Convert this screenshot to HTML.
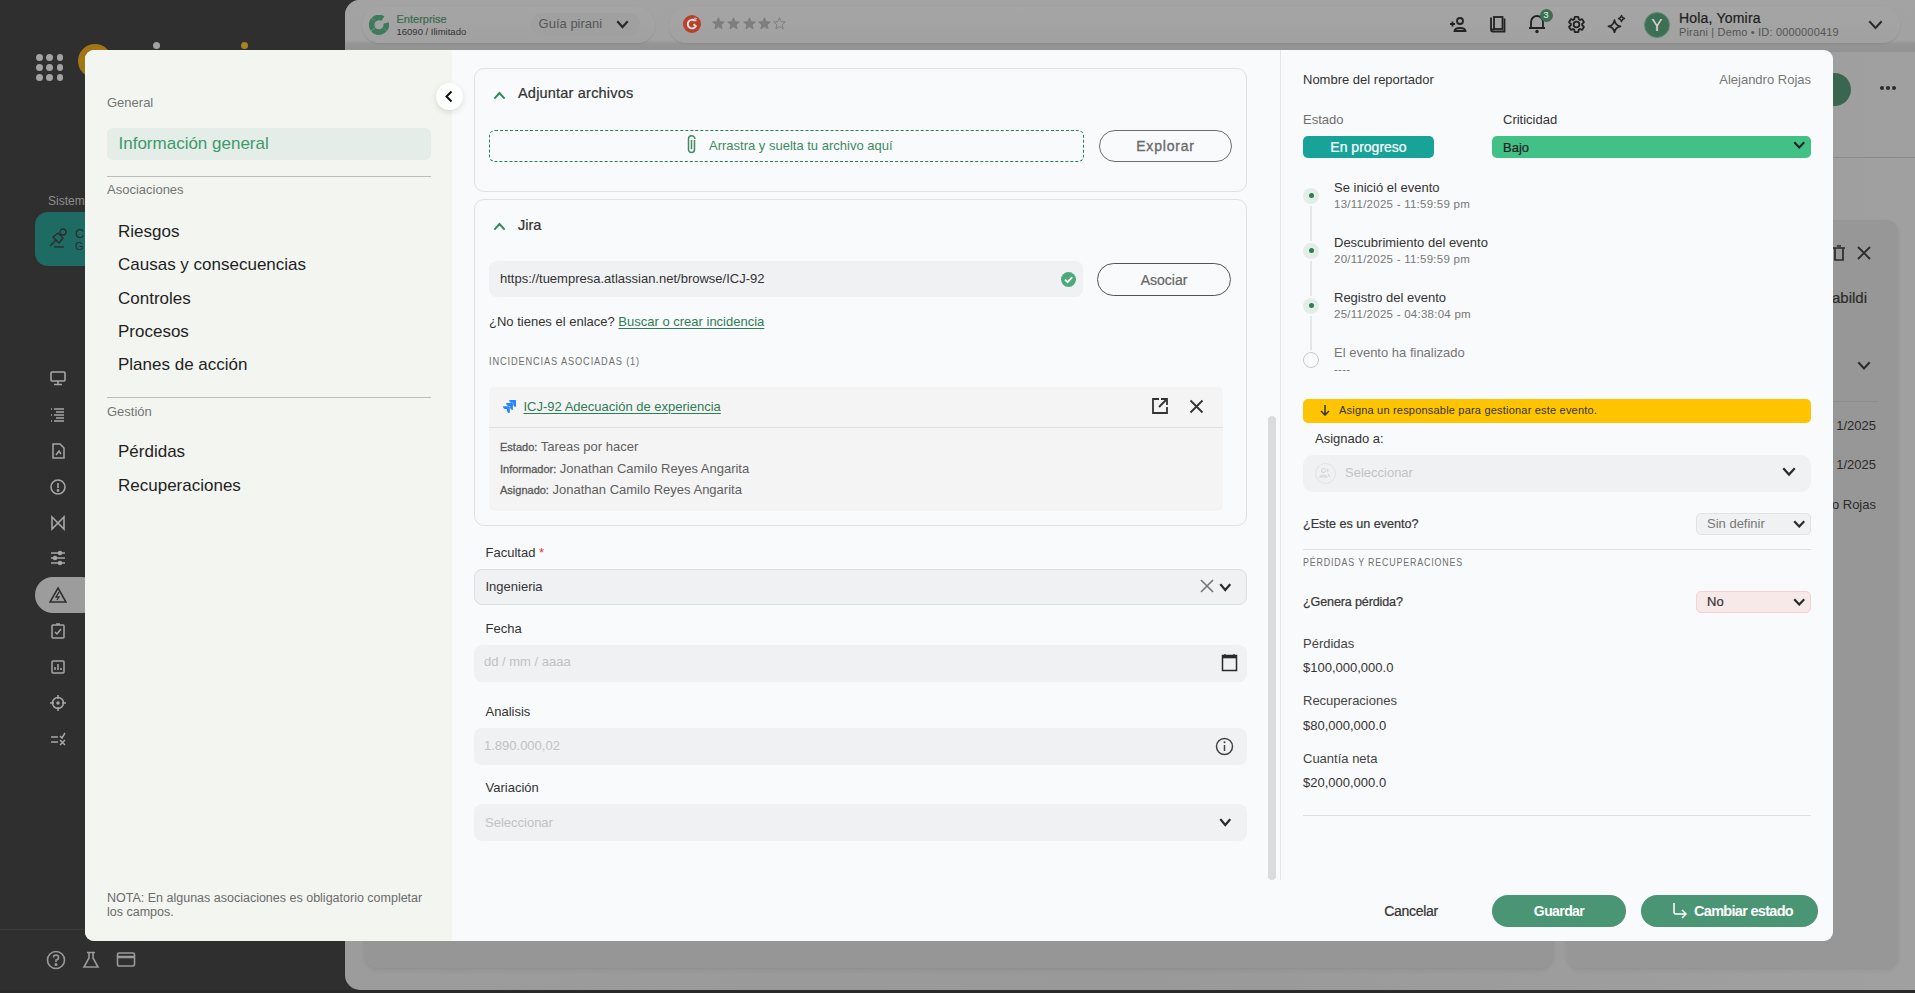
<!DOCTYPE html>
<html><head><meta charset="utf-8"><title>Evento</title>
<style>
*{box-sizing:border-box;margin:0;padding:0}
html,body{width:1915px;height:993px;overflow:hidden;background:#2f2f2f;font-family:"Liberation Sans",sans-serif}
.t{position:absolute;white-space:nowrap}
.r{position:absolute}
u{text-decoration:underline;text-underline-offset:2px}
</style></head><body>

<div class="r" style="left:0px;top:0px;width:345px;height:993px;background:#2f2f2f;border-radius:0px;"></div>
<div class="r" style="left:36.0px;top:54.0px;width:6.5px;height:6.5px;background:#a3a3a3;border-radius:4px;"></div>
<div class="r" style="left:46.3px;top:54.0px;width:6.5px;height:6.5px;background:#a3a3a3;border-radius:4px;"></div>
<div class="r" style="left:56.6px;top:54.0px;width:6.5px;height:6.5px;background:#a3a3a3;border-radius:4px;"></div>
<div class="r" style="left:36.0px;top:64.2px;width:6.5px;height:6.5px;background:#a3a3a3;border-radius:4px;"></div>
<div class="r" style="left:46.3px;top:64.2px;width:6.5px;height:6.5px;background:#a3a3a3;border-radius:4px;"></div>
<div class="r" style="left:56.6px;top:64.2px;width:6.5px;height:6.5px;background:#a3a3a3;border-radius:4px;"></div>
<div class="r" style="left:36.0px;top:74.4px;width:6.5px;height:6.5px;background:#a3a3a3;border-radius:4px;"></div>
<div class="r" style="left:46.3px;top:74.4px;width:6.5px;height:6.5px;background:#a3a3a3;border-radius:4px;"></div>
<div class="r" style="left:56.6px;top:74.4px;width:6.5px;height:6.5px;background:#a3a3a3;border-radius:4px;"></div>
<div class="r" style="left:78px;top:44px;width:34px;height:34px;border-radius:50%;background:#a27617"></div>
<div class="r" style="left:153px;top:42px;width:7px;height:7px;background:#a3a3a3;border-radius:4px;"></div>
<div class="r" style="left:241px;top:42px;width:7px;height:7px;background:#a9841d;border-radius:4px;"></div>
<div class="t" style="top:193.84px;font-size:12px;line-height:15px;color:#8e8e8e;font-weight:400;left:48px;">Sistema</div>
<div class="r" style="left:35px;top:212px;width:85px;height:54px;background:#1e6b63;border-radius:13px;"></div>
<svg class="r" style="left:48px;top:228px;" width="20" height="20" viewBox="0 0 20 20"><g fill="none" stroke="#2b2b2b" stroke-width="1.3"><path d="M2 18 L8 12"/><path d="M5 9 L11 15 L15 10 L10 5 Z"/><path d="M6 19 L16 19"/><circle cx="15" cy="4" r="3"/></g></svg>
<div class="t" style="top:225.50px;font-size:13px;line-height:16px;color:#2b2b2b;font-weight:400;left:75px;">C</div>
<div class="t" style="top:239.19px;font-size:11px;line-height:14px;color:#2b2b2b;font-weight:400;left:75px;">G</div>
<div class="r" style="left:35px;top:577px;width:65px;height:36px;background:#9c9c9c;border-radius:18px;"></div>
<svg class="r" style="left:49px;top:369px;" width="18" height="18" viewBox="0 0 18 18"><g fill="none" stroke="#a6a6a6" stroke-width="1.6"><rect x="2" y="3" width="14" height="9" rx="1"/><path d="M9 12 V15 M5 15.5 H13"/></g></svg>
<svg class="r" style="left:49px;top:405px;" width="18" height="18" viewBox="0 0 18 18"><g fill="none" stroke="#a6a6a6" stroke-width="1.4"><path d="M5 4 H15 M7 7 H15 M5 10 H15 M7 13 H15 M5 16 H15"/><path d="M2 4 H3 M2 10 H3 M2 16 H3"/></g></svg>
<svg class="r" style="left:49px;top:442px;" width="18" height="18" viewBox="0 0 18 18"><g fill="none" stroke="#a6a6a6" stroke-width="1.5"><path d="M4 2 H11 L15 6 V16 H4 Z"/><path d="M7 13 L10 9 L12 12"/></g></svg>
<svg class="r" style="left:49px;top:478px;" width="18" height="18" viewBox="0 0 18 18"><g fill="none" stroke="#a6a6a6" stroke-width="1.6"><circle cx="9" cy="9" r="7"/><path d="M9 5 V10"/><circle cx="9" cy="12.5" r="0.6" fill="#a6a6a6"/></g></svg>
<svg class="r" style="left:49px;top:514px;" width="18" height="18" viewBox="0 0 18 18"><g fill="none" stroke="#a6a6a6" stroke-width="1.6"><path d="M3 3 L15 15 V3 L3 15 Z"/></g></svg>
<svg class="r" style="left:49px;top:549px;" width="18" height="18" viewBox="0 0 18 18"><g fill="none" stroke="#a6a6a6" stroke-width="1.5"><path d="M2 4 H16 M2 9 H16 M2 14 H16"/><circle cx="11" cy="4" r="1.5" fill="#a6a6a6"/><circle cx="6" cy="9" r="1.5" fill="#a6a6a6"/><circle cx="11" cy="14" r="1.5" fill="#a6a6a6"/></g></svg>
<svg class="r" style="left:49px;top:586px;" width="18" height="18" viewBox="0 0 18 18"><g fill="none" stroke="#2e2e2e" stroke-width="1.6"><path d="M9 2 L17 16 H1 Z"/><path d="M10 6 L7 11 H10 L8 14" stroke-width="1.3"/></g></svg>
<svg class="r" style="left:49px;top:622px;" width="18" height="18" viewBox="0 0 18 18"><g fill="none" stroke="#a6a6a6" stroke-width="1.5"><rect x="3" y="3" width="12" height="13" rx="1"/><path d="M6 10 L8 12 L12 7"/><path d="M7 2 H11"/></g></svg>
<svg class="r" style="left:49px;top:658px;" width="18" height="18" viewBox="0 0 18 18"><g fill="none" stroke="#a6a6a6" stroke-width="1.5"><rect x="3" y="3" width="12" height="12" rx="1"/><path d="M6 12 V9 M9 12 V6 M12 12 V10"/></g></svg>
<svg class="r" style="left:49px;top:694px;" width="18" height="18" viewBox="0 0 18 18"><g fill="none" stroke="#a6a6a6" stroke-width="1.5"><circle cx="9" cy="9" r="5.5"/><path d="M9 1 V5 M9 13 V17 M1 9 H5 M13 9 H17"/><circle cx="9" cy="9" r="1" fill="#a6a6a6"/></g></svg>
<svg class="r" style="left:49px;top:730px;" width="18" height="18" viewBox="0 0 18 18"><g fill="none" stroke="#a6a6a6" stroke-width="1.5"><path d="M2 7 H9 M2 12 H9"/><path d="M11 6 L13 8 L16 3"/><path d="M11 10 L16 15 M16 10 L11 15"/></g></svg>
<div class="r" style="left:0px;top:929px;width:345px;height:1px;background:#3b3b3b;border-radius:0px;"></div>
<svg class="r" style="left:46px;top:950px;" width="20" height="20" viewBox="0 0 20 20"><g fill="none" stroke="#9a9a9a" stroke-width="1.6"><circle cx="10" cy="10" r="8.5"/><path d="M7.5 7.5 A2.5 2.5 0 1 1 10 10 V12"/><circle cx="10" cy="14.5" r="0.7" fill="#9a9a9a"/></g></svg>
<svg class="r" style="left:82px;top:951px;" width="18" height="18" viewBox="0 0 18 18"><g fill="none" stroke="#9a9a9a" stroke-width="1.6"><path d="M5 1.5 H13 M7 1.5 V7 L2 16 H16 L11 7 V1.5"/></g></svg>
<svg class="r" style="left:116px;top:951px;" width="20" height="18" viewBox="0 0 20 18"><g fill="none" stroke="#9a9a9a" stroke-width="1.6"><rect x="1.5" y="2" width="17" height="13" rx="1.5"/><path d="M1.5 6 H18.5" stroke-width="2.5"/></g></svg>
<div class="r" style="left:0px;top:990px;width:1915px;height:3px;background:#2a2a2a;border-radius:0px;"></div>
<div class="r" style="left:345px;top:0;width:1570px;height:990px;background:linear-gradient(90deg,#9c9c9c,#999 50%,#a0a0a0);border-top-left-radius:15px;border-bottom-left-radius:15px"></div>
<div class="r" style="left:345px;top:0px;width:1570px;height:52px;background:linear-gradient(#a3a3a3 0px,#a2a2a2 40px,#949494 44px,#939393 52px);border-radius:0px;border-top-left-radius:15px;"></div>
<div class="r" style="left:362px;top:7px;width:293px;height:36px;background:linear-gradient(#a5a5a5,#a1a1a1);border-radius:18px;box-shadow:0 1px 2px rgba(0,0,0,0.10);"></div>
<div class="r" style="left:531px;top:13px;width:109px;height:23px;background:#a0a0a0;border-radius:12px;"></div>
<div class="r" style="left:669px;top:7px;width:1231px;height:36px;background:linear-gradient(#a5a5a5,#a1a1a1);border-radius:18px;box-shadow:0 1px 2px rgba(0,0,0,0.10);"></div>
<svg class="r" style="left:369px;top:15px;" width="20" height="20" viewBox="0 0 20 20"><circle cx="10" cy="9.8" r="7.3" fill="none" stroke="#3f7a5c" stroke-width="5.6" stroke-dasharray="6.37 0.38 13 0.38 9.81 0.38 9.81 5.73" transform="rotate(-15 10 9.8)"/></svg>
<div class="t" style="top:12.19px;font-size:11px;line-height:14px;color:#3b6b53;font-weight:400;-webkit-text-stroke:0.22px currentColor;left:396.5px;">Enterprise</div>
<div class="t" style="top:25.71px;font-size:9.5px;line-height:12px;color:#333;font-weight:400;left:396.5px;">16090 / Ilimitado</div>
<div class="t" style="top:15.50px;font-size:13px;line-height:16px;color:#565656;font-weight:400;left:538.6px;">Guía pirani</div>
<svg class="r" style="left:615.5px;top:19.8px;" width="13" height="9" viewBox="0 0 13 9"><path d="M2 2 L6.5 7 L11 2" fill="none" stroke="#2a2a2a" stroke-width="2.2" stroke-linecap="square"/></svg>
<svg class="r" style="left:683px;top:15px;" width="18" height="18" viewBox="0 0 18 18"><circle cx="9" cy="9" r="9" fill="#b9412c"/><path d="M11.6 5.6 A4.3 4.3 0 1 0 12.8 11.2 L10.6 9.3" fill="none" stroke="#e6e6e6" stroke-width="1.9"/><path d="M11.2 3.6 Q12.6 2.6 13.4 3.5 Q13.6 4.4 11.4 5.8 H13.6" fill="none" stroke="#e6e6e6" stroke-width="0.9"/></svg>
<svg class="r" style="left:712.0px;top:17px;" width="13" height="13" viewBox="0 0 13 13"><path d="M6.5 0.8 L8.2 4.7 L12.3 5 L9.2 7.7 L10.1 11.8 L6.5 9.6 L2.9 11.8 L3.8 7.7 L0.7 5 L4.8 4.7 Z" fill="#7e7e7e" stroke="#7e7e7e" stroke-width="1"/></svg>
<svg class="r" style="left:727.3px;top:17px;" width="13" height="13" viewBox="0 0 13 13"><path d="M6.5 0.8 L8.2 4.7 L12.3 5 L9.2 7.7 L10.1 11.8 L6.5 9.6 L2.9 11.8 L3.8 7.7 L0.7 5 L4.8 4.7 Z" fill="#7e7e7e" stroke="#7e7e7e" stroke-width="1"/></svg>
<svg class="r" style="left:742.6px;top:17px;" width="13" height="13" viewBox="0 0 13 13"><path d="M6.5 0.8 L8.2 4.7 L12.3 5 L9.2 7.7 L10.1 11.8 L6.5 9.6 L2.9 11.8 L3.8 7.7 L0.7 5 L4.8 4.7 Z" fill="#7e7e7e" stroke="#7e7e7e" stroke-width="1"/></svg>
<svg class="r" style="left:757.9px;top:17px;" width="13" height="13" viewBox="0 0 13 13"><path d="M6.5 0.8 L8.2 4.7 L12.3 5 L9.2 7.7 L10.1 11.8 L6.5 9.6 L2.9 11.8 L3.8 7.7 L0.7 5 L4.8 4.7 Z" fill="#7e7e7e" stroke="#7e7e7e" stroke-width="1"/></svg>
<svg class="r" style="left:773.2px;top:17px;" width="13" height="13" viewBox="0 0 13 13"><path d="M6.5 0.8 L8.2 4.7 L12.3 5 L9.2 7.7 L10.1 11.8 L6.5 9.6 L2.9 11.8 L3.8 7.7 L0.7 5 L4.8 4.7 Z" fill="none" stroke="#7e7e7e" stroke-width="1"/></svg>
<svg class="r" style="left:1448px;top:15px;" width="20" height="18" viewBox="0 0 20 18"><g fill="none" stroke="#222" stroke-width="1.8"><path d="M2 9 H7 M4.5 6.5 V11.5"/><circle cx="12" cy="6" r="3"/><path d="M6.5 16 C7 12 17 12 17.5 16 Z"/></g></svg>
<svg class="r" style="left:1489px;top:16px;" width="17" height="17" viewBox="0 0 17 17"><g fill="none" stroke="#222" stroke-width="1.8"><path d="M2 1.5 V14 Q2 15.5 3.5 15.5 H15.5 V2.5"/><rect x="5" y="1" width="8.5" height="12"/><path d="M2 13.5 H5"/></g></svg>
<svg class="r" style="left:1527px;top:12px;" width="20" height="22" viewBox="0 0 20 22"><g fill="none" stroke="#222" stroke-width="1.8"><path d="M4 16 V10 A6 6 0 0 1 16 10 V16 Z M2 16 H18"/></g><circle cx="10" cy="19.5" r="1.7" fill="#222"/></svg>
<div class="r" style="left:1539.5px;top:8.5px;width:13px;height:13px;border-radius:50%;background:#3c6f54"></div>
<div class="t" style="top:10.38px;font-size:9px;line-height:11px;color:#ddd;font-weight:400;-webkit-text-stroke:0.22px currentColor;left:1540.00px;width:12px;text-align:center;">3</div>
<svg class="r" style="left:1567px;top:14.5px;" width="19" height="19" viewBox="0 0 24 24"><path d="M19.14 12.94c.04-.3.06-.61.06-.94 0-.32-.02-.64-.07-.94l2.03-1.58c.18-.14.23-.41.12-.61l-1.92-3.32c-.12-.22-.37-.29-.59-.22l-2.39.96c-.5-.38-1.03-.7-1.62-.94l-.36-2.54c-.04-.24-.24-.41-.48-.41h-3.84c-.24 0-.43.17-.47.41l-.36 2.54c-.59.24-1.13.57-1.62.94l-2.39-.96c-.22-.08-.47 0-.59.22L2.74 8.87c-.12.21-.08.47.12.61l2.03 1.58c-.05.3-.09.63-.09.94s.02.64.07.94l-2.03 1.58c-.18.14-.23.41-.12.61l1.92 3.32c.12.22.37.29.59.22l2.39-.96c.5.38 1.03.7 1.62.94l.36 2.54c.05.24.24.41.48.41h3.84c.24 0 .44-.17.47-.41l.36-2.54c.59-.24 1.13-.56 1.62-.94l2.39.96c.22.08.47 0 .59-.22l1.92-3.32c.12-.22.07-.47-.12-.61l-2.01-1.58zM12 15.6c-1.98 0-3.6-1.62-3.6-3.6s1.62-3.6 3.6-3.6 3.6 1.62 3.6 3.6-1.62 3.6-3.6 3.6z" fill="none" stroke="#222" stroke-width="2.3" stroke-linejoin="round"/></svg>
<svg class="r" style="left:1607px;top:13.5px;" width="19" height="19" viewBox="0 0 19 19"><g fill="none" stroke="#222" stroke-width="1.7" stroke-linejoin="round"><path d="M7.5 6 Q8.3 11.5 13.5 12.3 Q8.3 13.1 7.5 18.5 Q6.7 13.1 1.5 12.3 Q6.7 11.5 7.5 6 Z"/><path d="M14.5 1.5 Q15 4 17.5 4.5 Q15 5 14.5 7.5 Q14 5 11.5 4.5 Q14 4 14.5 1.5 Z" stroke-width="1.4"/></g></svg>
<div class="r" style="left:1644px;top:12px;width:26px;height:26px;border-radius:50%;background:#3d6f55;border:1px solid #5e8a72"></div>
<div class="t" style="top:14.61px;font-size:17px;line-height:21px;color:#d8d8d8;font-weight:400;left:1644.00px;width:26px;text-align:center;">Y</div>
<div class="t" style="top:8.85px;font-size:14px;line-height:18px;color:#1e1e1e;font-weight:400;-webkit-text-stroke:0.22px currentColor;letter-spacing:0.2px;left:1679px;">Hola, Yomira</div>
<div class="t" style="top:24.59px;font-size:11px;line-height:14px;color:#555;font-weight:400;letter-spacing:0.17px;left:1679px;">Pirani | Demo • ID: 0000000419</div>
<svg class="r" style="left:1867.5px;top:20.0px;" width="15" height="10" viewBox="0 0 15 10"><path d="M2 2 L7.5 8 L13 2" fill="none" stroke="#2a2a2a" stroke-width="2" stroke-linecap="square"/></svg>
<div class="r" style="left:1818px;top:73px;width:33px;height:33px;border-radius:50%;background:#3a6650"></div>
<div class="r" style="left:1880px;top:86px;width:4px;height:4px;background:#2a2a2a;border-radius:2px;"></div>
<div class="r" style="left:1886px;top:86px;width:4px;height:4px;background:#2a2a2a;border-radius:2px;"></div>
<div class="r" style="left:1892px;top:86px;width:4px;height:4px;background:#2a2a2a;border-radius:2px;"></div>
<div class="r" style="left:1833px;top:157px;width:82px;height:1px;background:#8a8a8a;border-radius:0px;"></div>
<div class="r" style="left:1567px;top:220px;width:331px;height:748px;background:#979797;border-radius:12px;box-shadow:0 2px 4px rgba(0,0,0,0.08);"></div>
<div class="r" style="left:365px;top:900px;width:1188px;height:68px;background:#969696;border-radius:12px;box-shadow:0 2px 4px rgba(0,0,0,0.08);"></div>
<svg class="r" style="left:1832px;top:245px;" width="14" height="16" viewBox="0 0 14 16"><g fill="none" stroke="#2b2b2b" stroke-width="1.7"><path d="M1 3 H13 M5 1 H9 M3 3 V15 H11 V3"/></g></svg>
<svg class="r" style="left:1857px;top:246px;" width="14" height="14" viewBox="0 0 14 14"><g fill="none" stroke="#2b2b2b" stroke-width="1.8"><path d="M1 1 L13 13 M13 1 L1 13"/></g></svg>
<div class="t" style="top:288.30px;font-size:15px;line-height:19px;color:#2b2b2b;font-weight:400;-webkit-text-stroke:0.22px currentColor;left:1832px;">abildi</div>
<svg class="r" style="left:1857.0px;top:361.25px;" width="14" height="9.5" viewBox="0 0 14 9.5"><path d="M2 2 L7.0 7.5 L12 2" fill="none" stroke="#2b2b2b" stroke-width="2" stroke-linecap="square"/></svg>
<div class="r" style="left:1833px;top:401px;width:45px;height:1px;background:#8c8c8c;border-radius:0px;"></div>
<div class="t" style="top:417.50px;font-size:13px;line-height:16px;color:#2b2b2b;font-weight:400;right:39px;text-align:right;">1/2025</div>
<div class="t" style="top:456.50px;font-size:13px;line-height:16px;color:#2b2b2b;font-weight:400;right:39px;text-align:right;">1/2025</div>
<div class="t" style="top:496.50px;font-size:13px;line-height:16px;color:#2b2b2b;font-weight:400;right:39px;text-align:right;">ro Rojas</div>
<div class="r" style="left:85px;top:50px;width:1748px;height:891px;border-radius:9px;background:#f9fafb;overflow:hidden"><div class="r" style="left:0;top:0;width:367px;height:891px;background:#f3f5f1"></div></div>
<div class="t" style="top:94.50px;font-size:13px;line-height:16px;color:#757575;font-weight:400;left:107px;">General</div>
<div class="r" style="left:107px;top:128px;width:324px;height:32px;background:#e4ede8;border-radius:6px;"></div>
<div class="t" style="top:132.81px;font-size:17px;line-height:21px;color:#3d9a6b;font-weight:400;left:118.5px;">Información general</div>
<div class="r" style="left:107px;top:176px;width:324px;height:1px;background:#bdbdbd;border-radius:0px;"></div>
<div class="t" style="top:182.10px;font-size:13px;line-height:16px;color:#757575;font-weight:400;left:107px;">Asociaciones</div>
<div class="t" style="top:220.91px;font-size:17px;line-height:21px;color:#1f1f1f;font-weight:400;left:118px;">Riesgos</div>
<div class="t" style="top:253.81px;font-size:17px;line-height:21px;color:#1f1f1f;font-weight:400;left:118px;">Causas y consecuencias</div>
<div class="t" style="top:287.61px;font-size:17px;line-height:21px;color:#1f1f1f;font-weight:400;left:118px;">Controles</div>
<div class="t" style="top:320.81px;font-size:17px;line-height:21px;color:#1f1f1f;font-weight:400;left:118px;">Procesos</div>
<div class="t" style="top:354.31px;font-size:17px;line-height:21px;color:#1f1f1f;font-weight:400;left:118px;">Planes de acción</div>
<div class="r" style="left:107px;top:397px;width:324px;height:1px;background:#bdbdbd;border-radius:0px;"></div>
<div class="t" style="top:403.60px;font-size:13px;line-height:16px;color:#757575;font-weight:400;left:107px;">Gestión</div>
<div class="t" style="top:441.31px;font-size:17px;line-height:21px;color:#1f1f1f;font-weight:400;left:118px;">Pérdidas</div>
<div class="t" style="top:475.11px;font-size:17px;line-height:21px;color:#1f1f1f;font-weight:400;left:118px;">Recuperaciones</div>
<div class="t" style="top:889.97px;font-size:12.5px;line-height:16px;color:#6b6b6b;font-weight:400;left:107px;">NOTA: En algunas asociaciones es obligatorio completar</div>
<div class="t" style="top:904.17px;font-size:12.5px;line-height:16px;color:#6b6b6b;font-weight:400;left:107px;">los campos.</div>
<div class="r" style="left:436px;top:83px;width:27px;height:27px;border-radius:50%;background:#fff;box-shadow:0 2px 6px rgba(0,0,0,0.12)"></div>
<svg class="r" style="left:444px;top:90px;" width="10" height="13" viewBox="0 0 10 13"><path d="M7.5 1.5 L2.5 6.5 L7.5 11.5" fill="none" stroke="#111" stroke-width="2"/></svg>
<div class="r" style="left:474px;top:68px;width:772.5px;height:123.5px;background:#f9fafb;border-radius:10px;border:1px solid #e0e1e3;"></div>
<svg class="r" style="left:493.2px;top:90.7px;" width="13" height="9" viewBox="0 0 13 9"><path d="M2 7 L6.5 2 L11 7" fill="none" stroke="#2e8a5c" stroke-width="1.9" stroke-linecap="square"/></svg>
<div class="t" style="top:83.98px;font-size:14.5px;line-height:18px;color:#333;font-weight:400;-webkit-text-stroke:0.22px currentColor;letter-spacing:0.2px;left:518px;">Adjuntar archivos</div>
<div class="r" style="left:489px;top:130px;width:595px;height:32px;background:transparent;border-radius:6px;border:1px dashed #2e7d53;"></div>
<svg class="r" style="left:685px;top:134px;" width="13" height="22" viewBox="0 0 13 22"><path d="M9.5 6 V15.5 A3 3 0 0 1 3.5 15.5 V5 A3.2 3.2 0 0 1 9.9 5" fill="none" stroke="#3f8a63" stroke-width="1.5"/><path d="M6.5 6 V15" fill="none" stroke="#3f8a63" stroke-width="1.5"/></svg>
<div class="t" style="top:137.50px;font-size:13px;line-height:16px;color:#3f8a63;font-weight:400;left:709px;">Arrastra y suelta tu archivo aquí</div>
<div class="r" style="left:1099px;top:130px;width:133px;height:32px;background:transparent;border-radius:16px;border:1.5px solid #6e6e6e;"></div>
<div class="t" style="top:137.15px;font-size:14px;line-height:18px;color:#6b6b6b;font-weight:400;-webkit-text-stroke:0.22px currentColor;letter-spacing:0.8px;left:1099.00px;width:133px;text-align:center;-webkit-text-stroke:0.35px #6b6b6b;">Explorar</div>
<div class="r" style="left:474px;top:199px;width:772.5px;height:326.5px;background:#f9fafb;border-radius:10px;border:1px solid #e0e1e3;"></div>
<svg class="r" style="left:493.2px;top:222.4px;" width="13" height="9" viewBox="0 0 13 9"><path d="M2 7 L6.5 2 L11 7" fill="none" stroke="#2e8a5c" stroke-width="1.9" stroke-linecap="square"/></svg>
<div class="t" style="top:216.18px;font-size:14.5px;line-height:18px;color:#333;font-weight:400;-webkit-text-stroke:0.22px currentColor;left:518px;">Jira</div>
<div class="r" style="left:489px;top:261px;width:594px;height:36px;background:#f0f1f3;border-radius:8px;"></div>
<div class="t" style="top:270.70px;font-size:13px;line-height:16px;color:#333;font-weight:400;left:500px;">https://tuempresa.atlassian.net/browse/ICJ-92</div>
<svg class="r" style="left:1060.5px;top:271.5px;" width="15" height="15" viewBox="0 0 15 15"><circle cx="7.5" cy="7.5" r="7.5" fill="#4caa7a"/><path d="M4 7.7 L6.6 10.2 L11.2 5.2" fill="none" stroke="#fff" stroke-width="1.8"/></svg>
<div class="r" style="left:1097px;top:263px;width:134px;height:33px;background:transparent;border-radius:17px;border:1px solid #555;"></div>
<div class="t" style="top:270.65px;font-size:14px;line-height:18px;color:#666;font-weight:400;-webkit-text-stroke:0.22px currentColor;left:1097.00px;width:134px;text-align:center;">Asociar</div>
<div class="t" style="top:313.70px;font-size:13px;line-height:16px;color:#333;font-weight:400;left:489px;">¿No tienes el enlace? <u style="color:#2e7d55">Buscar o crear incidencia</u></div>
<div class="t" style="top:354.86px;font-size:10.5px;line-height:13px;color:#6f6f6f;font-weight:400;letter-spacing:1.0px;transform:scaleX(0.878);transform-origin:0 0;left:489px;">INCIDENCIAS ASOCIADAS (1)</div>
<div class="r" style="left:489px;top:387px;width:734px;height:123.5px;background:#f4f4f4;border-radius:5px;"></div>
<div class="r" style="left:489px;top:427px;width:734px;height:1px;background:#e0e0e0;border-radius:0px;"></div>
<svg class="r" style="left:503px;top:400px;" width="13" height="13" viewBox="0 0 24 24"><path d="M11.571 11.513H0a5.218 5.218 0 0 0 5.232 5.215h2.13v2.057A5.215 5.215 0 0 0 12.575 24V12.518a1.005 1.005 0 0 0-1.005-1.005zm5.723-5.756H5.736a5.215 5.215 0 0 0 5.215 5.214h2.129v2.058a5.218 5.218 0 0 0 5.215 5.214V6.758a1.001 1.001 0 0 0-1.001-1.001zM23.013 0H11.455a5.215 5.215 0 0 0 5.215 5.215h2.129v2.057A5.215 5.215 0 0 0 24 12.483V1.005A1.001 1.001 0 0 0 23.013 0Z" fill="#2684ff"/></svg>
<div class="t" style="top:398.80px;font-size:13px;line-height:16px;color:#2e7d55;font-weight:400;left:523.5px;"><u>ICJ-92 Adecuación de experiencia</u></div>
<svg class="r" style="left:1151px;top:397px;" width="18" height="18" viewBox="0 0 18 18"><g fill="none" stroke="#333" stroke-width="1.8"><path d="M8 2 H2 V16 H16 V10"/><path d="M10 2 H16 V8 M16 2 L8 10"/></g></svg>
<svg class="r" style="left:1189px;top:399px;" width="15" height="15" viewBox="0 0 15 15"><g fill="none" stroke="#333" stroke-width="1.8"><path d="M1.5 1.5 L13.5 13.5 M13.5 1.5 L1.5 13.5"/></g></svg>
<div class="t" style="top:439.10px;font-size:13px;line-height:16px;color:#5f5f5f;font-weight:400;left:500px;"><span style="font-size:11px;-webkit-text-stroke:0.3px #5a5a5a;color:#5a5a5a">Estado:</span> Tareas por hacer</div>
<div class="t" style="top:460.70px;font-size:13px;line-height:16px;color:#5f5f5f;font-weight:400;left:500px;"><span style="font-size:11px;-webkit-text-stroke:0.3px #5a5a5a;color:#5a5a5a">Informador:</span> Jonathan Camilo Reyes Angarita</div>
<div class="t" style="top:482.30px;font-size:13px;line-height:16px;color:#5f5f5f;font-weight:400;left:500px;"><span style="font-size:11px;-webkit-text-stroke:0.3px #5a5a5a;color:#5a5a5a">Asignado:</span> Jonathan Camilo Reyes Angarita</div>
<div class="t" style="top:544.60px;font-size:13px;line-height:16px;color:#333;font-weight:400;left:485.5px;">Facultad <span style="color:#e53935">*</span></div>
<div class="r" style="left:474px;top:569px;width:773px;height:36px;background:#f0f1f3;border-radius:8px;border:1px solid #d6e4da;"></div>
<div class="t" style="top:578.50px;font-size:13px;line-height:16px;color:#333;font-weight:400;left:485.5px;">Ingenieria</div>
<svg class="r" style="left:1199px;top:578px;" width="16" height="16" viewBox="0 0 16 16"><g fill="none" stroke="#777" stroke-width="1.7"><path d="M2 2 L14 14 M14 2 L2 14"/></g></svg>
<svg class="r" style="left:1218.75px;top:583.0px;" width="12.5" height="9" viewBox="0 0 12.5 9"><path d="M2 2 L6.25 7 L10.5 2" fill="none" stroke="#2a2a2a" stroke-width="2.2" stroke-linecap="square"/></svg>
<div class="t" style="top:621.10px;font-size:13px;line-height:16px;color:#333;font-weight:400;left:485.5px;">Fecha</div>
<div class="r" style="left:474px;top:645px;width:773px;height:37px;background:#f0f1f3;border-radius:8px;"></div>
<div class="t" style="top:654.30px;font-size:13px;line-height:16px;color:#c2c2c2;font-weight:400;left:484px;">dd / mm / aaaa</div>
<svg class="r" style="left:1221px;top:653px;" width="17" height="19" viewBox="0 0 17 19"><g fill="none" stroke="#2a2a2a"><rect x="1.5" y="2.5" width="14" height="15" stroke-width="1.5"/><path d="M1.5 4 H15.5" stroke-width="2.6"/><path d="M4 1 V3 M13 1 V3" stroke-width="1.2"/></g></svg>
<div class="t" style="top:703.70px;font-size:13px;line-height:16px;color:#333;font-weight:400;left:485.5px;">Analisis</div>
<div class="r" style="left:474px;top:728px;width:773px;height:37px;background:#f0f1f3;border-radius:8px;"></div>
<div class="t" style="top:737.80px;font-size:13px;line-height:16px;color:#c2c2c2;font-weight:400;left:484px;">1.890.000,02</div>
<svg class="r" style="left:1215px;top:737px;" width="19" height="19" viewBox="0 0 19 19"><g fill="none" stroke="#444" stroke-width="1.5"><circle cx="9.5" cy="9.5" r="8"/><path d="M9.5 8 V14"/></g><circle cx="9.5" cy="5.3" r="1" fill="#444"/></svg>
<div class="t" style="top:780.00px;font-size:13px;line-height:16px;color:#333;font-weight:400;left:485.5px;">Variación</div>
<div class="r" style="left:474px;top:804px;width:773px;height:37px;background:#f0f1f3;border-radius:8px;"></div>
<div class="t" style="top:814.50px;font-size:13px;line-height:16px;color:#c2c2c2;font-weight:400;left:485px;">Seleccionar</div>
<svg class="r" style="left:1218.75px;top:817.5px;" width="12.5" height="9" viewBox="0 0 12.5 9"><path d="M2 2 L6.25 7 L10.5 2" fill="none" stroke="#2a2a2a" stroke-width="2.2" stroke-linecap="square"/></svg>
<div class="r" style="left:1268px;top:416px;width:8px;height:464px;background:#dcdcdc;border-radius:4px;"></div>
<div class="r" style="left:1280px;top:50px;width:1px;height:830px;background:#e6e6e6;border-radius:0px;"></div>
<div class="t" style="top:71.70px;font-size:13px;line-height:16px;color:#333;font-weight:400;left:1303px;">Nombre del reportador</div>
<div class="t" style="top:71.70px;font-size:13px;line-height:16px;color:#777;font-weight:400;right:104px;text-align:right;">Alejandro Rojas</div>
<div class="t" style="top:111.50px;font-size:13px;line-height:16px;color:#6f6f6f;font-weight:400;left:1303px;">Estado</div>
<div class="t" style="top:111.50px;font-size:13px;line-height:16px;color:#333;font-weight:400;left:1503px;">Criticidad</div>
<div class="r" style="left:1303px;top:136px;width:131px;height:22px;background:#17a398;border-radius:5px;"></div>
<div class="t" style="top:138.45px;font-size:14px;line-height:18px;color:#fff;font-weight:400;-webkit-text-stroke:0.22px currentColor;left:1303.00px;width:131px;text-align:center;">En progreso</div>
<div class="r" style="left:1492px;top:136px;width:319px;height:22px;background:#41c185;border-radius:5px;"></div>
<div class="t" style="top:139.50px;font-size:13px;line-height:16px;color:#222;font-weight:400;-webkit-text-stroke:0.22px currentColor;left:1503px;">Bajo</div>
<svg class="r" style="left:1793.25px;top:141.25px;" width="12.5" height="8.5" viewBox="0 0 12.5 8.5"><path d="M2 2 L6.25 6.5 L10.5 2" fill="none" stroke="#222" stroke-width="2" stroke-linecap="square"/></svg>
<div class="r" style="left:1310px;top:205.8px;width:2px;height:35.0px;background:#e6e6e6;border-radius:0px;"></div>
<div class="r" style="left:1310px;top:260.8px;width:2px;height:34.80000000000001px;background:#e6e6e6;border-radius:0px;"></div>
<div class="r" style="left:1310px;top:315.6px;width:2px;height:34.69999999999999px;background:#e6e6e6;border-radius:0px;"></div>
<div class="r" style="left:1303px;top:187.8px;width:16px;height:16px;border-radius:50%;background:#e4eee8"></div>
<div class="r" style="left:1308.5px;top:193.3px;width:5px;height:5px;border-radius:50%;background:#2e7d53"></div>
<div class="r" style="left:1303px;top:242.8px;width:16px;height:16px;border-radius:50%;background:#e4eee8"></div>
<div class="r" style="left:1308.5px;top:248.3px;width:5px;height:5px;border-radius:50%;background:#2e7d53"></div>
<div class="r" style="left:1303px;top:297.6px;width:16px;height:16px;border-radius:50%;background:#e4eee8"></div>
<div class="r" style="left:1308.5px;top:303.1px;width:5px;height:5px;border-radius:50%;background:#2e7d53"></div>
<div class="r" style="left:1303px;top:352.3px;width:16px;height:16px;border-radius:50%;border:1px solid #c9c9c9"></div>
<div class="t" style="top:179.50px;font-size:13px;line-height:16px;color:#333;font-weight:400;left:1334px;">Se inició el evento</div>
<div class="t" style="top:196.72px;font-size:11.5px;line-height:14px;color:#777;font-weight:400;letter-spacing:0.25px;left:1334px;">13/11/2025 - 11:59:59 pm</div>
<div class="t" style="top:234.50px;font-size:13px;line-height:16px;color:#333;font-weight:400;left:1334px;">Descubrimiento del evento</div>
<div class="t" style="top:251.72px;font-size:11.5px;line-height:14px;color:#777;font-weight:400;letter-spacing:0.25px;left:1334px;">20/11/2025 - 11:59:59 pm</div>
<div class="t" style="top:289.50px;font-size:13px;line-height:16px;color:#333;font-weight:400;left:1334px;">Registro del evento</div>
<div class="t" style="top:306.72px;font-size:11.5px;line-height:14px;color:#777;font-weight:400;letter-spacing:0.25px;left:1334px;">25/11/2025 - 04:38:04 pm</div>
<div class="t" style="top:344.50px;font-size:13px;line-height:16px;color:#777;font-weight:400;left:1334px;">El evento ha finalizado</div>
<div class="t" style="top:361.72px;font-size:11.5px;line-height:14px;color:#777;font-weight:400;letter-spacing:0.25px;left:1334px;">----</div>
<div class="r" style="left:1303px;top:399px;width:508px;height:24px;background:#ffc400;border-radius:5px;"></div>
<svg class="r" style="left:1319px;top:404px;" width="12" height="12" viewBox="0 0 12 12"><g fill="none" stroke="#333" stroke-width="1.5"><path d="M6 1 V11 M2 7 L6 11 L10 7"/></g></svg>
<div class="t" style="top:403.39px;font-size:11px;line-height:14px;color:#333;font-weight:400;letter-spacing:0.2px;left:1339px;">Asigna un responsable para gestionar este evento.</div>
<div class="t" style="top:430.50px;font-size:13px;line-height:16px;color:#333;font-weight:400;left:1315px;">Asignado a:</div>
<div class="r" style="left:1303px;top:455px;width:508px;height:37px;background:#f0f1f3;border-radius:10px;"></div>
<div class="r" style="left:1314.5px;top:462.5px;width:21px;height:21px;border-radius:50%;border:1.5px solid #e2e2e2"></div>
<svg class="r" style="left:1319px;top:467px;" width="12" height="12" viewBox="0 0 12 12"><g fill="none" stroke="#d5d5d5" stroke-width="1.2"><circle cx="4.5" cy="3.5" r="2"/><path d="M1 10 Q4.5 6 8 10 Z"/><path d="M8 2 Q10 3.5 8 5 M9 7 L11 10"/></g></svg>
<div class="t" style="top:464.50px;font-size:13px;line-height:16px;color:#c4c4c4;font-weight:400;left:1345px;">Seleccionar</div>
<svg class="r" style="left:1782.0px;top:467.25px;" width="14" height="9.5" viewBox="0 0 14 9.5"><path d="M2 2 L7.0 7.5 L12 2" fill="none" stroke="#2a2a2a" stroke-width="2.2" stroke-linecap="square"/></svg>
<div class="t" style="top:515.63px;font-size:12.6px;line-height:16px;color:#383838;font-weight:400;-webkit-text-stroke:0.22px currentColor;left:1303px;">¿Este es un evento?</div>
<div class="r" style="left:1696px;top:513px;width:115px;height:22px;background:#f0f1f2;border-radius:5px;border:1px solid #e2e2e2;"></div>
<div class="t" style="top:515.50px;font-size:13px;line-height:16px;color:#777;font-weight:400;left:1707px;">Sin definir</div>
<svg class="r" style="left:1792.75px;top:519.75px;" width="12.5" height="8.5" viewBox="0 0 12.5 8.5"><path d="M2 2 L6.25 6.5 L10.5 2" fill="none" stroke="#2a2a2a" stroke-width="2.2" stroke-linecap="square"/></svg>
<div class="r" style="left:1303px;top:549px;width:508px;height:1px;background:#e0e0e0;border-radius:0px;"></div>
<div class="t" style="top:556.16px;font-size:10.5px;line-height:13px;color:#6f6f6f;font-weight:400;letter-spacing:1.0px;transform:scaleX(0.843);transform-origin:0 0;left:1303px;">PÉRDIDAS Y RECUPERACIONES</div>
<div class="t" style="top:594.03px;font-size:12.6px;line-height:16px;color:#383838;font-weight:400;-webkit-text-stroke:0.22px currentColor;letter-spacing:-0.15px;left:1303px;">¿Genera pérdida?</div>
<div class="r" style="left:1696px;top:591px;width:115px;height:22px;background:#f8e9e9;border-radius:5px;border:1px solid #f2d2d2;"></div>
<div class="t" style="top:593.50px;font-size:13px;line-height:16px;color:#333;font-weight:400;-webkit-text-stroke:0.22px currentColor;left:1707px;">No</div>
<svg class="r" style="left:1792.75px;top:597.75px;" width="12.5" height="8.5" viewBox="0 0 12.5 8.5"><path d="M2 2 L6.25 6.5 L10.5 2" fill="none" stroke="#2a2a2a" stroke-width="2.2" stroke-linecap="square"/></svg>
<div class="t" style="top:635.50px;font-size:13px;line-height:16px;color:#444;font-weight:400;left:1303px;">Pérdidas</div>
<div class="t" style="top:660.30px;font-size:13px;line-height:16px;color:#333;font-weight:400;left:1303px;">$100,000,000.0</div>
<div class="t" style="top:693.10px;font-size:13px;line-height:16px;color:#444;font-weight:400;left:1303px;">Recuperaciones</div>
<div class="t" style="top:717.90px;font-size:13px;line-height:16px;color:#333;font-weight:400;left:1303px;">$80,000,000.0</div>
<div class="t" style="top:750.60px;font-size:13px;line-height:16px;color:#444;font-weight:400;left:1303px;">Cuantía neta</div>
<div class="t" style="top:775.40px;font-size:13px;line-height:16px;color:#333;font-weight:400;left:1303px;">$20,000,000.0</div>
<div class="r" style="left:1303px;top:815px;width:508px;height:1px;background:#e0e0e0;border-radius:0px;"></div>
<div class="t" style="top:902.15px;font-size:14px;line-height:18px;color:#333;font-weight:400;-webkit-text-stroke:0.22px currentColor;letter-spacing:-0.3px;left:1351.00px;width:120px;text-align:center;">Cancelar</div>
<div class="r" style="left:1492px;top:895px;width:134px;height:31.5px;background:#4a9573;border-radius:16px;"></div>
<div class="t" style="top:902.15px;font-size:14px;line-height:18px;color:#fff;font-weight:700;letter-spacing:-0.6px;left:1492.00px;width:134px;text-align:center;">Guardar</div>
<div class="r" style="left:1641px;top:895px;width:177px;height:31.5px;background:#4a9573;border-radius:16px;"></div>
<svg class="r" style="left:1671px;top:902px;" width="18" height="18" viewBox="0 0 18 18"><g fill="none" stroke="#fff" stroke-width="1.5"><path d="M3 1 V10 Q3 12 5 12 H15 M11 8 L15 12 L11 16"/></g></svg>
<div class="t" style="top:901.98px;font-size:14.5px;line-height:18px;color:#fff;font-weight:700;letter-spacing:-0.7px;left:1694px;">Cambiar estado</div>
</body></html>
